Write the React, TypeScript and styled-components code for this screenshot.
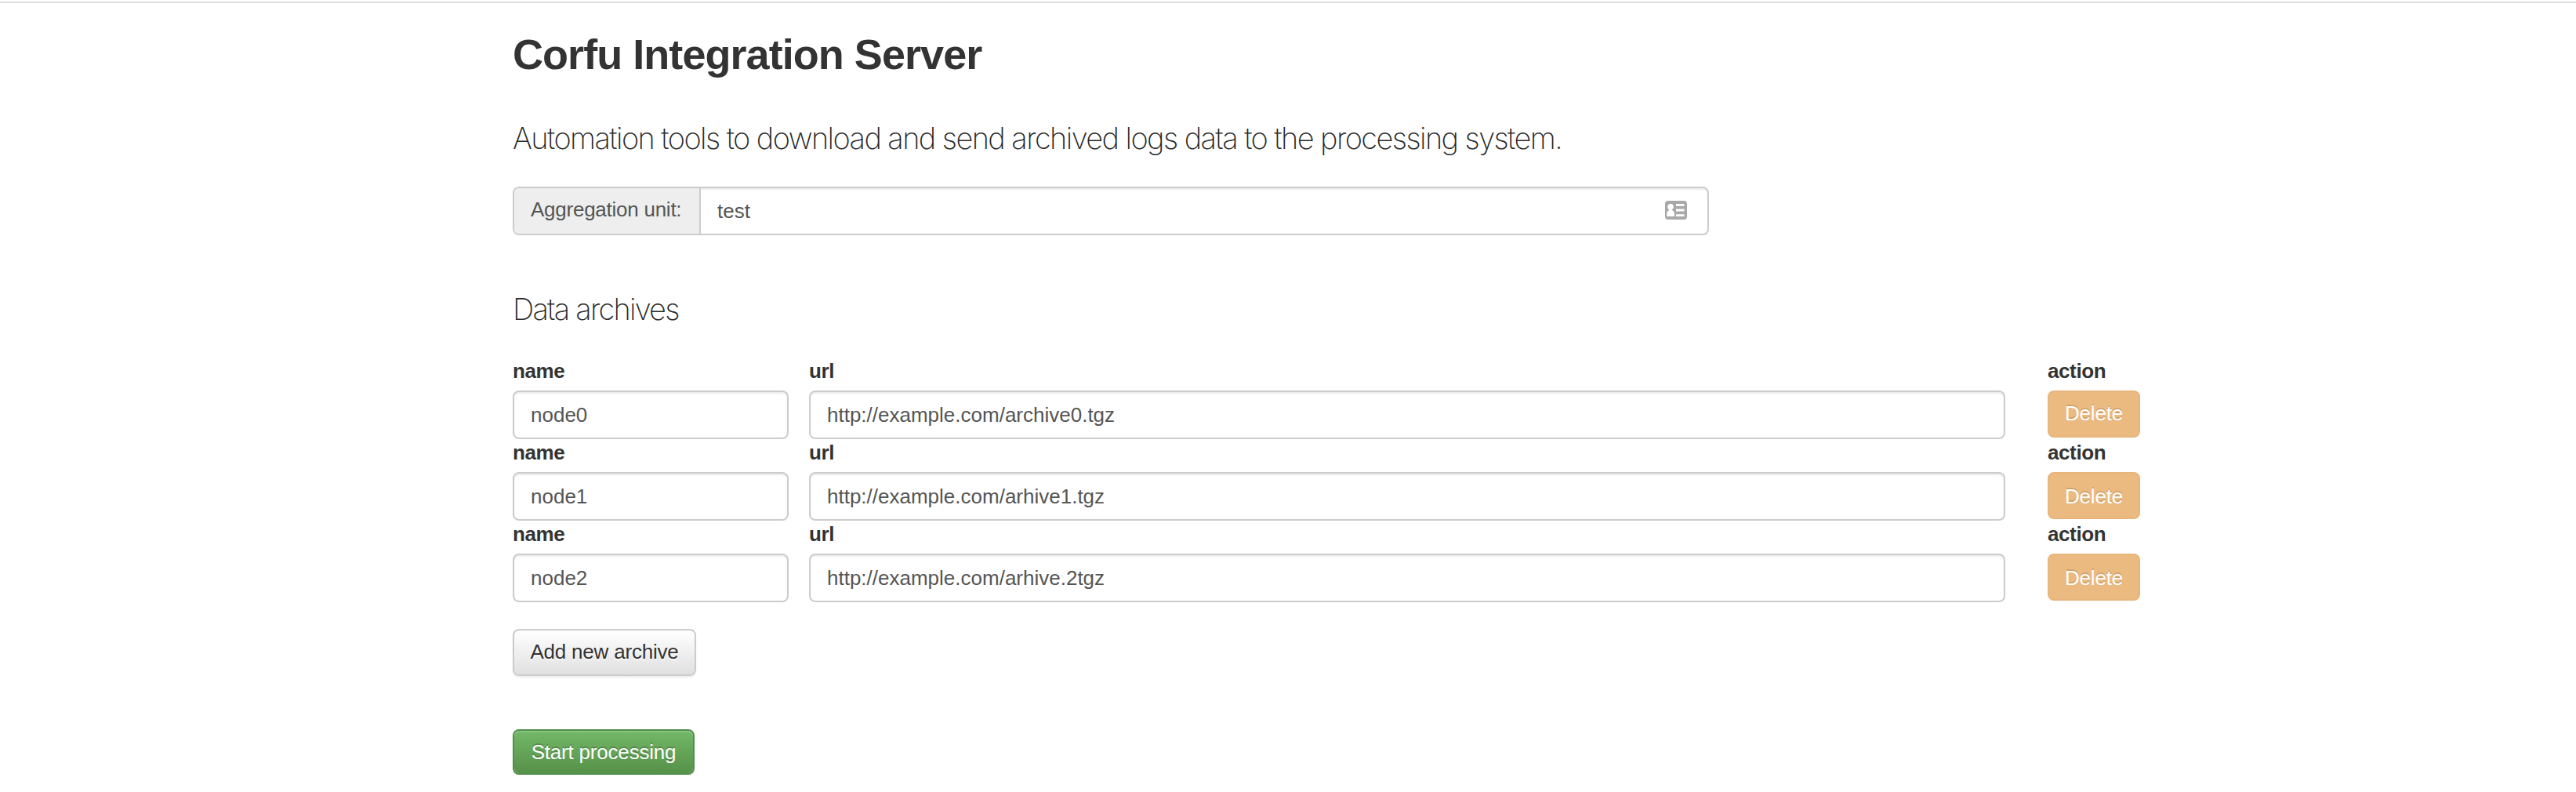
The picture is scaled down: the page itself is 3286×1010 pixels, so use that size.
import React from 'react';
import styled, { createGlobalStyle, css } from 'styled-components';

const GlobalStyle = createGlobalStyle`
  * { box-sizing: border-box; }
  body {
    margin: 0;
    background: #fff;
    color: #333;
    font-family: "Liberation Sans", Arial, sans-serif;
    font-size: 26px;
  }
`;

const Page = styled.div`
  padding-top: 2px;
`;

const TopRule = styled.div`
  height: 2px;
  background: #dcdce2;
`;

const Container = styled.main`
  width: 2078px;
  margin: 25px 0 0 654px;
  display: flex;
  flex-direction: column;
  align-items: flex-start;
`;

const Title = styled.h1`
  margin: 0 0 40px;
  font-size: 54px;
  line-height: 80px;
  letter-spacing: -0.95px;
  white-space: nowrap;
`;

const Lead = styled.p<{ $tracking: number }>`
  margin: 0 0 35px;
  font-family: Inter, "Liberation Sans", sans-serif;
  font-weight: 200;
  font-size: 38px;
  line-height: 54px;
  letter-spacing: ${(p) => p.$tracking}px;
  color: #282828;
  white-space: nowrap;
`;

const control = css`
  height: 62px;
  border: 2px solid #ccc;
  border-radius: 8px;
  background: #fff;
  box-shadow: inset 0 2px 2px rgba(0, 0, 0, 0.075);
`;

const InputGroup = styled.div`
  ${control}
  width: 1526px;
  margin-bottom: 67px;
  display: flex;
  align-items: stretch;
  padding-right: 26px;
`;

const Addon = styled.label`
  width: 238px;
  padding: 7px 0 0 21px;
  line-height: 40px;
  letter-spacing: -0.25px;
  color: #555;
  background: #eee;
  border-right: 2px solid #ccc;
  border-radius: 6px 0 0 6px;
  white-space: nowrap;
`;

const GroupInput = styled.input`
  flex: 1;
  min-width: 0;
  padding: 0 0 0 21px;
  border: 0;
  outline: 0;
  background: transparent;
  color: #555;
  font: inherit;
`;

const ContactIcon = styled.svg`
  width: 28px;
  height: 24px;
  margin-top: 16px;
  flex: none;
`;

const Archives = styled.section`
  display: flex;
  flex-direction: column;
  width: 100%;
  margin-bottom: 34px;
`;

const ArchiveRow = styled.div`
  display: grid;
  grid-template-columns: 352px 1526px 118px;
  column-gap: 26px;
  height: 104px;

  & > :last-child {
    margin-left: 28px;
    width: 118px;
  }
`;

const Field = styled.div`
  display: flex;
  flex-direction: column;
`;

const Label = styled.label`
  padding-bottom: 8px;
  font-weight: 700;
  line-height: 34px;
  letter-spacing: -0.4px;
`;

const TextInput = styled.input`
  ${control}
  width: 100%;
  padding: 0 21px;
  outline: 0;
  color: #555;
  font: inherit;
`;

const Button = styled.button`
  padding: 7px 20px 9px;
  border: 2px solid #ccc;
  border-radius: 8px;
  font: inherit;
  line-height: 40px;
  letter-spacing: -0.2px;
  text-align: center;
  white-space: nowrap;
`;

const AddButton = styled(Button)`
  width: 234px;
  height: 60px;
  margin-bottom: 68px;
  color: #333;
  text-shadow: 0 2px 2px rgba(255, 255, 255, 0.75);
  background: linear-gradient(#fff, #e0e0e0) padding-box;
  box-shadow: 0 2px 2px rgba(0, 0, 0, 0.075);
`;

const StartButton = styled(Button)`
  width: 232px;
  height: 58px;
  padding-bottom: 7px;
  color: #fff;
  text-shadow: 0 -2px 0 rgba(0, 0, 0, 0.2);
  border-color: #4f8f49;
  background: linear-gradient(#73b868, #569149) padding-box;
  box-shadow: inset 0 2px 0 rgba(255, 255, 255, 0.15), 0 2px 2px rgba(0, 0, 0, 0.05);
`;

const DeleteButton = styled(Button)<{ $drop: number }>`
  width: 118px;
  height: 60px;
  padding-top: ${(p) => 7 + p.$drop}px;
  padding-bottom: ${(p) => 9 - p.$drop}px;
  color: #fff;
  text-shadow: 0 -2px 0 rgba(0, 0, 0, 0.13);
  border-color: #e8b57c;
  background: #eaba80;
`;

const archives = [
  { name: 'node0', url: 'http://example.com/archive0.tgz', drop: 0 },
  { name: 'node1', url: 'http://example.com/arhive1.tgz', drop: 2 },
  { name: 'node2', url: 'http://example.com/arhive.2tgz', drop: 2 },
];

export default function App() {
  return (
    <Page>
      <GlobalStyle />
      <TopRule />
      <Container>
        <Title>Corfu Integration Server</Title>
        <Lead $tracking={-1.6}>
          Automation tools to download and send archived logs data to the processing system.
        </Lead>
        <InputGroup>
          <Addon htmlFor="unit">Aggregation unit:</Addon>
          <GroupInput id="unit" defaultValue="test" />
          <ContactIcon viewBox="0 0 28 24">
            <rect width="28" height="24" rx="4" fill="#a9a9a9" />
            <circle cx="7" cy="7.7" r="3.8" fill="#fff" />
            <path d="M5.4 10h3.2v2c2.2.6 3.2 2.2 3.2 5v3H2.2v-3c0-2.8 1-4.4 3.2-5z" fill="#fff" />
            <path d="M14 4h10.5v2.8H14zM14 10.6h10.5v2.8H14zM14 17.2h10.5V20H14z" fill="#fff" />
          </ContactIcon>
        </InputGroup>
        <Lead as="h2" $tracking={-1.8}>Data archives</Lead>
        <Archives>
          {archives.map((a) => (
            <ArchiveRow key={a.name}>
              <Field>
                <Label>name</Label>
                <TextInput defaultValue={a.name} />
              </Field>
              <Field>
                <Label>url</Label>
                <TextInput defaultValue={a.url} />
              </Field>
              <Field>
                <Label>action</Label>
                <DeleteButton $drop={a.drop}>Delete</DeleteButton>
              </Field>
            </ArchiveRow>
          ))}
        </Archives>
        <AddButton>Add new archive</AddButton>
        <StartButton>Start processing</StartButton>
      </Container>
    </Page>
  );
}
